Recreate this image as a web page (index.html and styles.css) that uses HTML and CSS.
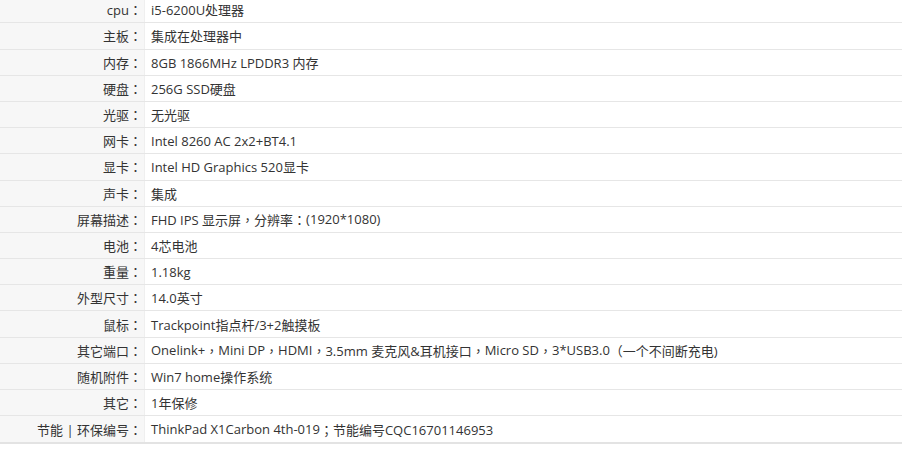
FILE: index.html
```html
<!DOCTYPE html>
<html lang="zh-CN">
<head>
<meta charset="utf-8">
<link rel="stylesheet" href="styles.css">
</head>
<body>
<div class="specs">
  <div class="row"><div class="label">cpu<span class="p">：</span></div><div class="value">i5-6200U处理器</div></div>
  <div class="row"><div class="label">主板<span class="p">：</span></div><div class="value">集成在处理器中</div></div>
  <div class="row"><div class="label">内存<span class="p">：</span></div><div class="value">8GB 1866MHz LPDDR3 内存</div></div>
  <div class="row"><div class="label">硬盘<span class="p">：</span></div><div class="value">256G SSD硬盘</div></div>
  <div class="row"><div class="label">光驱<span class="p">：</span></div><div class="value">无光驱</div></div>
  <div class="row"><div class="label">网卡<span class="p">：</span></div><div class="value">Intel 8260 AC 2x2+BT4.1</div></div>
  <div class="row"><div class="label">显卡<span class="p">：</span></div><div class="value">Intel HD Graphics 520显卡</div></div>
  <div class="row"><div class="label">声卡<span class="p">：</span></div><div class="value">集成</div></div>
  <div class="row"><div class="label">屏幕描述<span class="p">：</span></div><div class="value">FHD IPS 显示屏<span class="p">，</span>分辨率<span class="p">：</span>(1920*1080)</div></div>
  <div class="row"><div class="label">电池<span class="p">：</span></div><div class="value">4芯电池</div></div>
  <div class="row"><div class="label">重量<span class="p">：</span></div><div class="value">1.18kg</div></div>
  <div class="row"><div class="label">外型尺寸<span class="p">：</span></div><div class="value">14.0英寸</div></div>
  <div class="row"><div class="label">鼠标<span class="p">：</span></div><div class="value">Trackpoint指点杆/3+2触摸板</div></div>
  <div class="row"><div class="label">其它端口<span class="p">：</span></div><div class="value">Onelink+<span class="p">，</span>Mini DP<span class="p">，</span>HDMI<span class="p">，</span>3.5mm 麦克风&amp;耳机接口<span class="p">，</span>Micro SD<span class="p">，</span>3*USB3.0<span class="p">（</span>一个不间断充电)</div></div>
  <div class="row"><div class="label">随机附件<span class="p">：</span></div><div class="value">Win7 home操作系统</div></div>
  <div class="row"><div class="label">其它<span class="p">：</span></div><div class="value">1年保修</div></div>
  <div class="row last"><div class="label">节能 | 环保编号<span class="p">：</span></div><div class="value">ThinkPad X1Carbon 4th-019<span class="p">；</span>节能编号CQC16701146953</div></div>
</div>
</body>
</html>
```
FILE: styles.css
```css
html, body {
  margin: 0;
  padding: 0;
  background: #fff;
}
body {
  font-family: "Open Sans", "Noto Sans CJK SC", sans-serif;
  font-size: 13px;
  color: #333;
}
.p {
  font-family: "Noto Sans CJK TC", sans-serif;
}
.specs {
  margin-top: -2.8px;
  display: flex;
  flex-direction: column;
}
.row {
  display: grid;
  grid-template-columns: 145px 1fr;
  height: 26.2px;
  box-sizing: border-box;
  border-bottom: 1px solid #e6e6e6;
}
.row.last {
  height: 28px;
  border-bottom: 2px solid #e3e3e3;
}
.label {
  background: #f7f7f7;
  border-right: 1px solid #efefef;
  padding-right: 2px;
  display: flex;
  align-items: center;
  justify-content: flex-end;
  white-space: nowrap;
}
.value {
  padding-left: 6px;
  display: flex;
  align-items: center;
  white-space: pre;
}
```
